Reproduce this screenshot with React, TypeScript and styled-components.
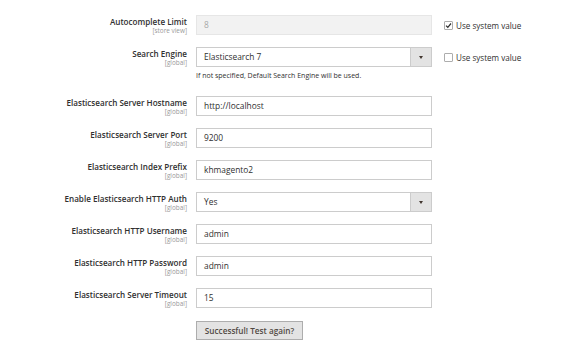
import React from "react";
import styled, { createGlobalStyle } from "styled-components";

const Global = createGlobalStyle`
  html, body { margin: 0; padding: 0; background: #fff; }
  body { font-family: "Open Sans", "Noto Sans", sans-serif; color: #303030; }
`;

const Page = styled.div`
  width: 570px;
  height: 350px;
  padding-top: 15px;
  box-sizing: border-box;
`;

const Form = styled.div`
  display: grid;
  grid-template-columns: 187px 236px 120px;
  column-gap: 9px;
  row-gap: 12px;
  align-items: start;
`;

const Row = styled.div`
  display: contents;
`;

const LabelCell = styled.div`
  text-align: right;
  padding-top: 2px;
  height: 20px;
  box-sizing: border-box;
`;

const LabelText = styled.div`
  font-size: 8.1px;
  font-weight: 600;
  line-height: 10px;
  color: #303030;
  white-space: nowrap;
`;

const Scope = styled.div`
  font-size: 6.4px;
  line-height: 8px;
  color: #999;
  white-space: nowrap;
`;

const ControlCell = styled.div`
  display: flex;
  flex-direction: column;
`;

const TextInput = styled.div<{ $disabled?: boolean }>`
  height: 20px;
  box-sizing: border-box;
  border: 1px solid ${(p) => (p.$disabled ? "#e6e6e6" : "#cccccc")};
  background: ${(p) => (p.$disabled ? "#f2f2f2" : "#fff")};
  color: ${(p) => (p.$disabled ? "#a8a8a8" : "#303030")};
  font-size: 8.4px;
  line-height: 18px;
  padding: 0 7px;
`;

const Select = styled.div`
  height: 20px;
  box-sizing: border-box;
  border: 1px solid #cccccc;
  background: #fff;
  display: flex;
  font-size: 8.4px;
  line-height: 18px;
`;

const SelectValue = styled.div`
  flex: 1;
  padding: 0 7px;
`;

const SelectArrow = styled.div`
  width: 20px;
  background: #e3e3e3;
  border-left: 1px solid #cccccc;
  display: flex;
  align-items: center;
  justify-content: center;
  &::after {
    content: "";
    border-left: 2.5px solid transparent;
    border-right: 2.5px solid transparent;
    border-top: 3px solid #41362f;
  }
`;

const Note = styled.div`
  font-size: 7px;
  line-height: 9px;
  color: #303030;
  margin-top: 4px;
  margin-bottom: 4px;
  white-space: nowrap;
`;

const SystemCell = styled.label`
  display: flex;
  align-items: center;
  gap: 3px;
  padding-top: 5px;
  margin-left: 3px;
  font-size: 8.1px;
  line-height: 11px;
  color: #303030;
  white-space: nowrap;
`;

const Box = styled.span`
  width: 9px;
  height: 9px;
  box-sizing: border-box;
  border: 1px solid #adadad;
  border-radius: 1px;
  background: #fff;
  display: inline-flex;
  align-items: center;
  justify-content: center;
`;

const Button = styled.div`
  width: 107px;
  height: 19px;
  margin-top: 1px;
  box-sizing: border-box;
  background: #e3e3e3;
  border: 1px solid #adadad;
  color: #514943;
  font-size: 8.2px;
  font-weight: 600;
  line-height: 17px;
  text-align: center;
`;

const Empty = styled.div``;

const Check = () => (
  <svg width="7" height="7" viewBox="0 0 7 7">
    <path d="M1 3.6 L2.8 5.3 L6 1.5" fill="none" stroke="#303030" strokeWidth="1.2" />
  </svg>
);

type Field = {
  label: string;
  scope: string;
  value: string;
  kind?: "select" | "text";
  disabled?: boolean;
  note?: string;
  system?: "checked" | "unchecked";
};

const fields: Field[] = [
  { label: "Autocomplete Limit", scope: "[store view]", value: "8", disabled: true, system: "checked" },
  {
    label: "Search Engine",
    scope: "[global]",
    value: "Elasticsearch 7",
    kind: "select",
    note: "If not specified, Default Search Engine will be used.",
    system: "unchecked",
  },
  { label: "Elasticsearch Server Hostname", scope: "[global]", value: "http://localhost" },
  { label: "Elasticsearch Server Port", scope: "[global]", value: "9200" },
  { label: "Elasticsearch Index Prefix", scope: "[global]", value: "khmagento2" },
  { label: "Enable Elasticsearch HTTP Auth", scope: "[global]", value: "Yes", kind: "select" },
  { label: "Elasticsearch HTTP Username", scope: "[global]", value: "admin" },
  { label: "Elasticsearch HTTP Password", scope: "[global]", value: "admin" },
  { label: "Elasticsearch Server Timeout", scope: "[global]", value: "15" },
];

export default function App() {
  return (
    <Page>
      <Global />
      <Form>
        {fields.map((f) => (
          <Row key={f.label}>
            <LabelCell>
              <LabelText>{f.label}</LabelText>
              <Scope>{f.scope}</Scope>
            </LabelCell>
            <ControlCell>
              {f.kind === "select" ? (
                <Select>
                  <SelectValue>{f.value}</SelectValue>
                  <SelectArrow />
                </Select>
              ) : (
                <TextInput $disabled={f.disabled}>{f.value}</TextInput>
              )}
              {f.note && <Note>{f.note}</Note>}
            </ControlCell>
            {f.system ? (
              <SystemCell>
                <Box>{f.system === "checked" && <Check />}</Box>
                Use system value
              </SystemCell>
            ) : (
              <Empty />
            )}
          </Row>
        ))}
        <Row>
          <Empty />
          <ControlCell>
            <Button>Successful! Test again?</Button>
          </ControlCell>
          <Empty />
        </Row>
      </Form>
    </Page>
  );
}
